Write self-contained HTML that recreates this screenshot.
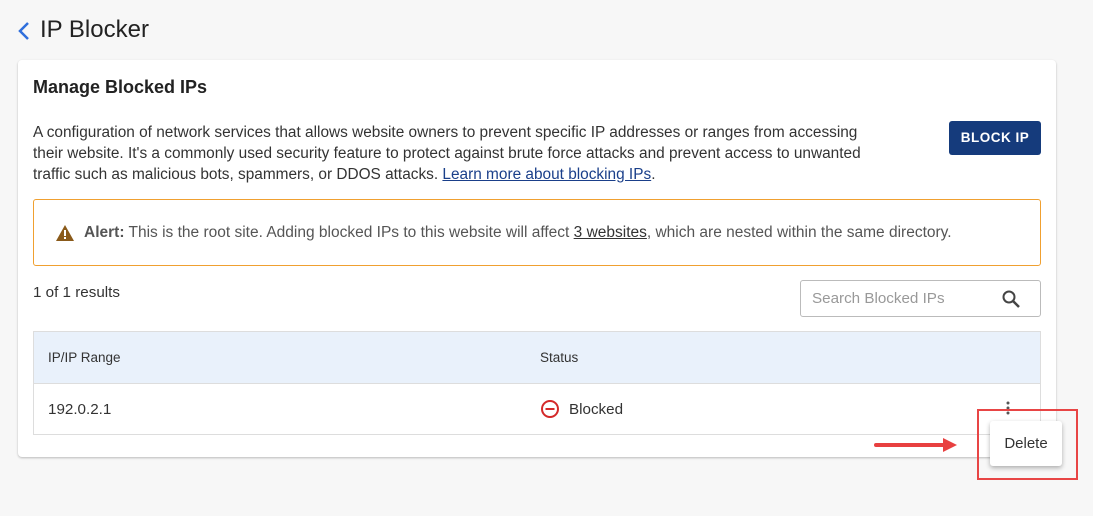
<!DOCTYPE html>
<html><head><style>
body{margin:0;width:1093px;height:516px;background:#f7f7f7;font-family:"Liberation Sans",sans-serif;color:#333;position:relative;overflow:hidden}
.a{position:absolute;white-space:nowrap}
.card{position:absolute;left:18px;top:60px;width:1038px;height:397px;background:#fff;border-radius:4px;box-shadow:0 1px 2px rgba(0,0,0,.25)}
a{color:#1a3f8a;text-decoration:underline}
</style></head><body>
<svg class="a" style="left:17px;top:21px" width="14" height="20"><path d="M11 2 L3 10 L11 18" stroke="#2f6fdc" stroke-width="2.5" fill="none"/></svg>
<div class="a" style="left:40px;top:16px;font-size:24px;color:#222">IP Blocker</div>
<div class="card"></div>
<div class="a" style="left:33px;top:77px;font-size:18px;font-weight:bold;color:#222">Manage Blocked IPs</div>
<div class="a" style="left:33px;top:122px;font-size:15.4px;line-height:21px;color:#333">A configuration of network services that allows website owners to prevent specific IP addresses or ranges from accessing<br>their website. It's a commonly used security feature to protect against brute force attacks and prevent access to unwanted<br>traffic such as malicious bots, spammers, or DDOS attacks. <a>Learn more about blocking IPs</a>.</div>
<div class="a" style="left:949px;top:121px;width:92px;height:34px;background:#153b7c;border-radius:3px;color:#fff;font-weight:bold;font-size:13.5px;line-height:34px;text-align:center;letter-spacing:.5px">BLOCK IP</div>
<div class="a" style="left:33px;top:199px;width:1006px;height:65px;border:1px solid #f0a030;border-radius:3px"></div>
<svg class="a" style="left:55px;top:224px" width="20" height="18"><path d="M10 1 L19 17 L1 17Z" fill="#8a5a1a"/><rect x="9" y="6" width="2" height="6" fill="#fff"/><rect x="9" y="13" width="2" height="2" fill="#fff"/></svg>
<div class="a" style="left:84px;top:224px;font-size:15.5px;color:#555"><b>Alert:</b> This is the root site. Adding blocked IPs to this website will affect <a style="color:#333">3 websites</a>, which are nested within the same directory.</div>
<div class="a" style="left:33px;top:284px;font-size:15.2px">1 of 1 results</div>
<div class="a" style="left:800px;top:280px;width:239px;height:35px;border:1px solid #bbb;border-radius:3px"></div>
<div class="a" style="left:812px;top:290px;font-size:15.2px;color:#999">Search Blocked IPs</div>
<svg class="a" style="left:1001px;top:289px" width="20" height="20"><circle cx="8" cy="8" r="5.5" stroke="#444" stroke-width="2" fill="none"/><path d="M12 12 L18 18" stroke="#444" stroke-width="2.5"/></svg>
<div class="a" style="left:33px;top:331px;width:1006px;height:102px;border:1px solid #ddd"></div>
<div class="a" style="left:34px;top:332px;width:1006px;height:51px;background:#e9f1fb;border-bottom:1px solid #ddd"></div>
<div class="a" style="left:48px;top:350px;font-size:13.5px;color:#333">IP/IP Range</div>
<div class="a" style="left:540px;top:350px;font-size:13.5px;color:#333">Status</div>
<div class="a" style="left:48px;top:401px;font-size:15.2px">192.0.2.1</div>
<svg class="a" style="left:540px;top:399px" width="20" height="20"><circle cx="10" cy="10" r="8" stroke="#d42a2a" stroke-width="2" fill="none"/><path d="M5.5 10 H14.5" stroke="#d42a2a" stroke-width="2"/></svg>
<div class="a" style="left:569px;top:401px;font-size:15.2px">Blocked</div>
<svg class="a" style="left:1005px;top:400px" width="6" height="16"><circle cx="3" cy="3" r="1.5" fill="#555"/><circle cx="3" cy="8" r="1.5" fill="#555"/><circle cx="3" cy="13" r="1.5" fill="#555"/></svg>
<div class="a" style="left:990px;top:421px;width:72px;height:45px;background:#fff;border-radius:3px;box-shadow:0 2px 5px rgba(0,0,0,.3);font-size:15px;line-height:45px;text-align:center">Delete</div>
<div class="a" style="left:977px;top:409px;width:97px;height:67px;border:2px solid #e84545"></div>
<svg class="a" style="left:873px;top:434px" width="86" height="20"><path d="M3 11 H72" stroke="#e84040" stroke-width="4" stroke-linecap="round"/><path d="M70 4 L84 11 L70 18Z" fill="#e84040"/></svg>
</body></html>
